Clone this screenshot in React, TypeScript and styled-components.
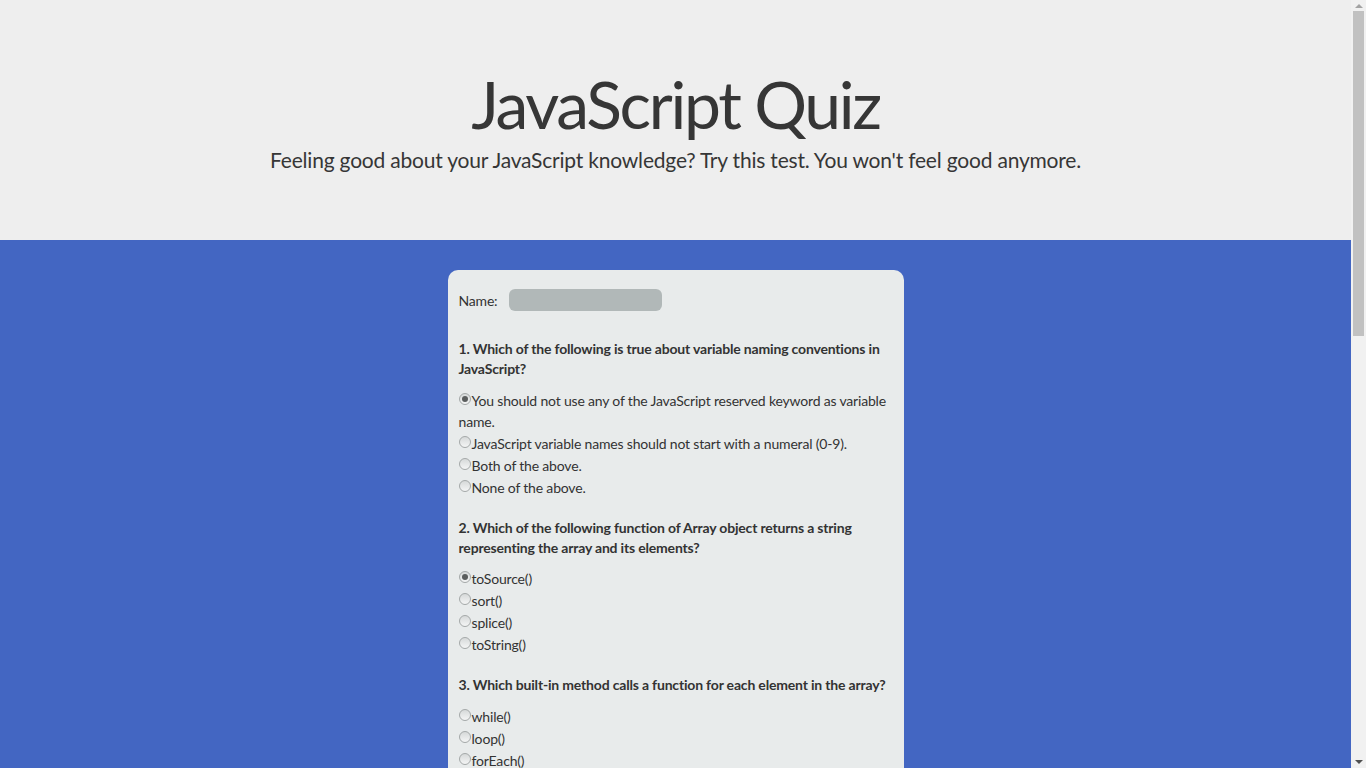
import React, { useState } from 'react';
import styled, { createGlobalStyle } from 'styled-components';

const GlobalStyle = createGlobalStyle`
  html, body {
    margin: 0;
    padding: 0;
    height: 100%;
    overflow: hidden;
  }
  body {
    background-color: #4366c2;
    font-family: Lato, "Noto Sans", "Liberation Sans", sans-serif;
    color: #333333;
  }
`;

const Page = styled.div`
  display: grid;
  grid-template-columns: 1fr 15px;
  height: 100vh;
`;

const Scroller = styled.div`
  overflow-y: auto;
  scrollbar-width: none;
  &::-webkit-scrollbar {
    display: none;
  }
`;

const ScrollRail = styled.div`
  display: flex;
  flex-direction: column;
  align-items: center;
  background-color: #f1f1f1;
`;

const Arrow = styled.div<{ $down?: boolean }>`
  width: 0;
  height: 0;
  margin: 4px 0 3px;
  border-left: 4px solid transparent;
  border-right: 4px solid transparent;
  ${({ $down }) =>
    $down
      ? 'border-top: 4px solid #505050; margin-top: auto; margin-bottom: 4px;'
      : 'border-bottom: 4px solid #a3a3a3;'}
`;

const Thumb = styled.div`
  width: 11px;
  height: 325px;
  background-color: #c1c1c1;
`;

const Header = styled.header`
  background-color: #eeeeee;
  height: 240px;
  box-sizing: border-box;
  padding-top: 64px;
  text-align: center;
`;

const Title = styled.h1`
  margin: 0;
  font-size: 66px;
  font-weight: 400;
  letter-spacing: -2.3px;
  line-height: 80px;
  color: #363636;
`;

const Subtitle = styled.p`
  margin: 1px 0 0;
  font-size: 21px;
  letter-spacing: -0.2px;
  line-height: 30px;
  color: #363636;
`;

const Main = styled.main`
  padding: 30px 0 60px;
`;

const Card = styled.form`
  width: 456px;
  box-sizing: border-box;
  margin: 0 auto;
  padding: 19px 11px 24px;
  background-color: #e8ebeb;
  border-radius: 10px;
  font-size: 14px;
  letter-spacing: -0.18px;
  line-height: 21px;
`;

const NameRow = styled.div`
  display: flex;
  align-items: center;
  gap: 12px;
  margin-bottom: 28px;
`;

const NameInput = styled.input`
  width: 153px;
  height: 22px;
  box-sizing: border-box;
  border: none;
  border-radius: 6px;
  background-color: #b1b8b8;
  outline: none;
`;

const Question = styled.fieldset`
  border: none;
  margin: 0 0 19px;
  padding: 0;
`;

const Prompt = styled.legend`
  padding: 0;
  margin-bottom: 10.5px;
  font-weight: 700;
  line-height: 20px;
`;

const Option = styled.label`
  display: block;
  margin-bottom: 1px;
`;

const Radio = styled.input`
  appearance: none;
  width: 12px;
  height: 12px;
  margin: 0 1px 0 0;
  border-radius: 50%;
  border: 1px solid #a4a8a8;
  background: linear-gradient(#d6d9d9, #f4f5f5);
  vertical-align: 1px;
  position: relative;
  &:checked::after {
    content: '';
    position: absolute;
    left: 2px;
    top: 2px;
    width: 6px;
    height: 6px;
    border-radius: 50%;
    background: #5a5d5d;
  }
`;

const SubmitButton = styled.button`
  padding: 8px 22px;
  border: none;
  border-radius: 6px;
  background-color: #4366c2;
  color: #ffffff;
  font-family: inherit;
  font-size: 15px;
`;

const questions = [
  {
    text: '1. Which of the following is true about variable naming conventions in JavaScript?',
    options: [
      'You should not use any of the JavaScript reserved keyword as variable name.',
      'JavaScript variable names should not start with a numeral (0-9).',
      'Both of the above.',
      'None of the above.',
    ],
  },
  {
    text: '2. Which of the following function of Array object returns a string representing the array and its elements?',
    options: ['toSource()', 'sort()', 'splice()', 'toString()'],
  },
  {
    text: '3. Which built-in method calls a function for each element in the array?',
    options: ['while()', 'loop()', 'forEach()', 'None of the above.'],
  },
  {
    text: '4. Which of the following is the correct syntax to redirect a url using JavaScript?',
    options: [
      "document.location='http://www.newlocation.com';",
      "browser.location='http://www.newlocation.com';",
      "navigator.location='http://www.newlocation.com';",
      "window.location='http://www.newlocation.com';",
    ],
  },
  {
    text: '5. What is the result of typeof NaN?',
    options: ['"number"', '"NaN"', '"undefined"', '"object"'],
  },
  {
    text: '6. Which of the following function of String object returns the characters in a string between two indexes into the string?',
    options: ['slice()', 'split()', 'substr()', 'substring()'],
  },
  {
    text: '7. What does [] + {} evaluate to?',
    options: ['"[object Object]"', '0', 'undefined', 'NaN'],
  },
  {
    text: '8. Which of the following is a valid type of function javascript supports?',
    options: ['named function', 'anonymous function', 'Both of the above.', 'None of the above.'],
  },
  {
    text: '9. What is the value of 0.1 + 0.2 === 0.3?',
    options: ['true', 'false', 'undefined', 'TypeError'],
  },
  {
    text: '10. Which of the following function of Array object adds one or more elements to the end of an array and returns the new length of the array?',
    options: ['pop()', 'push()', 'join()', 'map()'],
  },
];

const App: React.FC = () => {
  const [answers, setAnswers] = useState<Record<number, number>>({ 0: 0, 1: 0 });

  return (
    <Page>
      <GlobalStyle />
      <Scroller>
        <Header>
          <Title>JavaScript Quiz</Title>
          <Subtitle>
            Feeling good about your JavaScript knowledge? Try this test. You won't feel good anymore.
          </Subtitle>
        </Header>
        <Main>
          <Card onSubmit={(e) => e.preventDefault()}>
            <NameRow>
              <label htmlFor="name">Name:</label>
              <NameInput id="name" type="text" />
            </NameRow>
            {questions.map((q, qi) => (
              <Question key={q.text}>
                <Prompt>{q.text}</Prompt>
                {q.options.map((opt, oi) => (
                  <Option key={opt}>
                    <Radio
                      type="radio"
                      name={`q${qi}`}
                      checked={answers[qi] === oi}
                      onChange={() => setAnswers({ ...answers, [qi]: oi })}
                    />
                    {opt}
                  </Option>
                ))}
              </Question>
            ))}
            <SubmitButton type="submit">Submit</SubmitButton>
          </Card>
        </Main>
      </Scroller>
      <ScrollRail aria-hidden="true">
        <Arrow />
        <Thumb />
        <Arrow $down />
      </ScrollRail>
    </Page>
  );
};

export default App;
